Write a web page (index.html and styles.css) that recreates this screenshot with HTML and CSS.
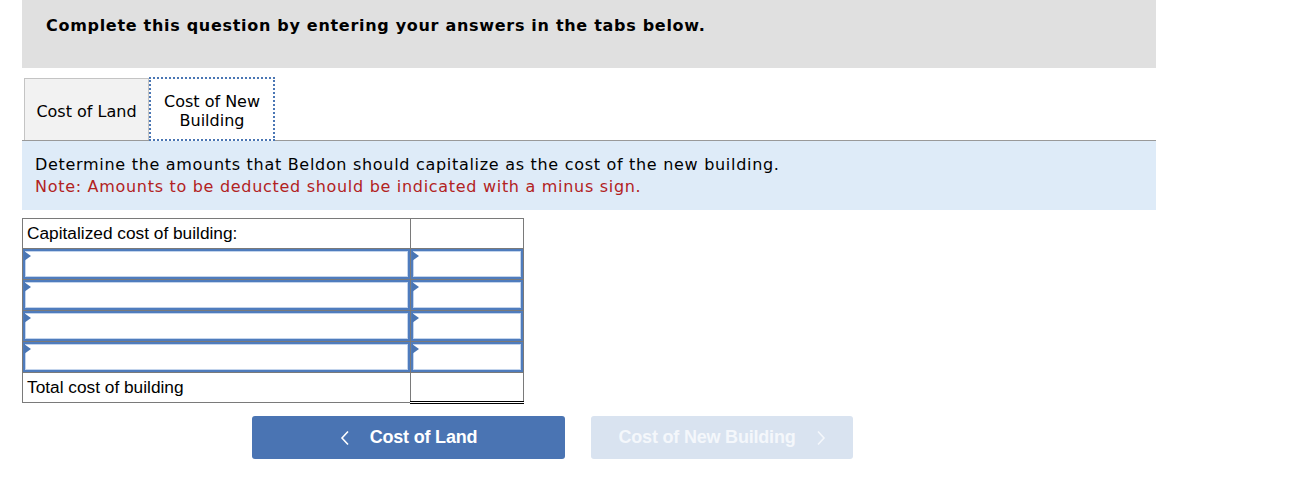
FILE: index.html
```html
<!DOCTYPE html>
<html>
<head>
<meta charset="utf-8">
<link rel="stylesheet" href="styles.css">
</head>
<body>
<div class="page">
  <div class="banner">Complete this question by entering your answers in the tabs below.</div>
  <div class="tabs">
    <div class="tab">Cost of Land</div>
    <div class="tab active">Cost of New<br>Building</div>
  </div>
  <div class="info">
    <div>Determine the amounts that Beldon should capitalize as the cost of the new building.</div>
    <div class="note">Note: Amounts to be deducted should be indicated with a minus sign.</div>
  </div>
  <table class="grid">
    <tr><td class="label">Capitalized cost of building:</td><td></td></tr>
    <tr><td class="in"><div class="box"></div></td><td class="in"><div class="box"></div></td></tr>
    <tr><td class="in"><div class="box"></div></td><td class="in"><div class="box"></div></td></tr>
    <tr><td class="in"><div class="box"></div></td><td class="in"><div class="box"></div></td></tr>
    <tr><td class="in"><div class="box"></div></td><td class="in"><div class="box"></div></td></tr>
    <tr><td class="label">Total cost of building</td><td class="total"></td></tr>
  </table>
  <div class="nav">
    <div class="btn prev">
      <svg width="10" height="16" viewBox="0 0 10 16"><path d="M8 1.5 L2 8 L8 14.5" fill="none" stroke="#fff" stroke-width="1.6"/></svg>
      <span>Cost of Land</span>
    </div>
    <div class="btn next">
      <span>Cost of New Building</span>
      <svg width="10" height="16" viewBox="0 0 10 16"><path d="M2 1.5 L8 8 L2 14.5" fill="none" stroke="#f4f7fb" stroke-width="1.6"/></svg>
    </div>
  </div>
</div>
</body>
</html>
```
FILE: styles.css
```css
html, body { margin: 0; padding: 0; background: #fff; }
.page {
  margin-left: 22px;
  width: 1134px;
  font-family: "DejaVu Sans", Verdana, sans-serif;
  color: #000;
}
.banner {
  background: #e0e0e0;
  height: 68px;
  box-sizing: border-box;
  padding: 15px 0 0 24px;
  font-weight: bold;
  font-size: 16px;
  line-height: 22px;
  letter-spacing: 0.7px;
}
.tabs {
  display: flex;
  margin-top: 10px;
  padding-left: 2px;
  border-bottom: 1px solid #999;
  height: 62px;
}
.tab {
  box-sizing: border-box;
  width: 125px;
  height: 62px;
  padding-top: 3px;
  background: #f2f2f2;
  border: 1px solid #c4c4c4;
  border-bottom: none;
  display: flex;
  align-items: center;
  justify-content: center;
  text-align: center;
  font-size: 16px;
  line-height: 19px;
}
.tab.active {
  background: #fff;
  width: 126px;
  height: 64px;
  margin-top: -1px;
  border: 2px dotted #4a76b4;
}
.info {
  background: #deebf8;
  height: 69px;
  box-sizing: border-box;
  padding: 13px 0 0 13px;
  font-size: 16px;
  line-height: 22px;
  letter-spacing: 0.7px;
}
.note { color: #b22222; }
.grid {
  margin-top: 8px;
  border-collapse: collapse;
  font-family: "Liberation Sans", Arial, sans-serif;
  font-size: 17.3px;
}
.grid td {
  border: 1px solid #7a7a7a;
  height: 30px;
  padding: 0;
  box-sizing: border-box;
}
.grid td:first-child { width: 388px; }
.grid td:last-child { width: 113px; }
.grid td.label { padding-left: 4px; }
.grid td.in { height: 31px; }
.box {
  position: relative;
  height: 30px;
  box-sizing: border-box;
  border: 2px solid #4f7cbd;
  box-shadow: inset 0 0 0 1px #c3d4ec;
  background: #fff;
}
.box::before {
  content: "";
  position: absolute;
  left: -1px;
  top: 0;
  border-left: 7px solid #4a76b4;
  border-top: 5px solid transparent;
  border-bottom: 5px solid transparent;
}
.grid td.total {
  border-top: 1px solid #000;
  border-bottom: 3px double #000;
}
.nav {
  display: flex;
  gap: 26px;
  margin-top: 12px;
  padding-left: 230px;
}
.btn {
  height: 43px;
  border-radius: 3px;
  display: flex;
  align-items: center;
  justify-content: center;
  gap: 20px;
  font-family: "Liberation Sans", Arial, sans-serif;
  font-weight: bold;
  font-size: 18px;
  letter-spacing: -0.2px;
  color: #fff;
}
.btn.prev { width: 313px; background: #4a74b3; }
.btn.next { width: 262px; background: #d9e3f0; color: #f4f7fb; }
```
